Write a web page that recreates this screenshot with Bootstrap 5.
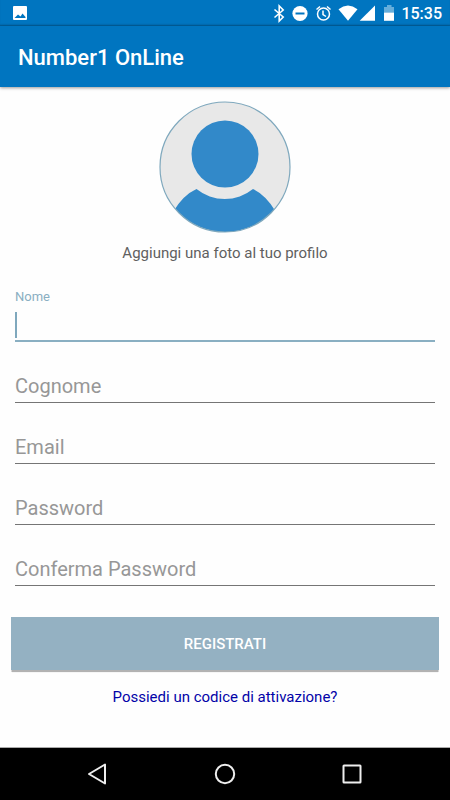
<!DOCTYPE html>
<html lang="it">
<head>
<meta charset="utf-8">
<meta name="viewport" content="width=device-width, initial-scale=1">
<title>Number1 OnLine</title>
<link href="https://cdn.jsdelivr.net/npm/bootstrap@5.3.0/dist/css/bootstrap.min.css" rel="stylesheet">
<style>
body { font-family: Roboto, sans-serif; background: #fefefe; }
.status-strip, .app-bar { background: #0075c0; color: #fff; }
.status-strip { height: 26px; font-size: 16px; line-height: 20px; font-weight: 500; box-shadow: inset 0 -2px 2px -1px rgba(0, 0, 0, .25); }
.status-strip .clock { padding-top: 2px; }
.status-strip svg, .sys-nav svg, .avatar svg { display: block; }
.app-bar { height: 61px; padding: 2px 18px 0; box-shadow: 0 1px 3px rgba(0, 0, 0, .4); }
.app-title { font-size: 22px; line-height: 28px; font-weight: 500; }
.avatar { margin-top: 14px; border-radius: 50%; }
.caption { font-size: 15px; line-height: 20px; margin-top: 10px; color: #606060; }
.sign-up { padding: 18px 11px 0; }
.field { height: 61px; margin: 0 4px; }
.field label { font-size: 13px; line-height: 16px; color: #8aafc2; }
.field .form-control { height: 37px; padding: 3px 0 0; font-size: 20px; line-height: 24px; border: 0; border-bottom: 1px solid #757575; border-radius: 0; background-color: transparent; box-shadow: none; }
.field .form-control.is-current { border-bottom: 2px solid #8aafc2; caret-color: transparent; background: linear-gradient(#7fa8bd, #7fa8bd) 0 7px / 2px 26px no-repeat; }
.field-hint > * { grid-area: 1 / 1; align-self: end; }
.field-hint label { height: 37px; padding-top: 8px; font-size: 20px; line-height: 24px; color: #979797; pointer-events: none; }
.field-hint .form-control:not(:placeholder-shown) + label { visibility: hidden; }
.btn-register { height: 53px; margin-top: 31px; padding-top: 8px; font-size: 15px; font-weight: 500; color: #fff; background: #94b1c2; border: 0; border-radius: 0; box-shadow: 0 3px 1px -1px rgba(0, 0, 0, .2), 0 2px 0 rgba(0, 0, 0, .12); }
.btn-register:hover { color: #fff; background: #86a6b8; }
.activation { font-size: 15px; line-height: 20px; margin-top: 17px; color: #0303a8; }
.sys-nav { height: 53px; background: #000; border-top: 1px solid #aaa; padding: 0 34px; }
.sys-nav button { width: 128px; background: none; }
</style>
<script src="https://cdn.jsdelivr.net/npm/bootstrap@5.3.0/dist/js/bootstrap.bundle.min.js"></script>
</head>
<body class="d-flex flex-column min-vh-100">
<div class="status-strip d-flex align-items-center justify-content-between ps-2 pe-2">
  <svg class="ms-1" width="16" height="16" viewBox="0 0 16 16" aria-hidden="true"><path fill="#fff" fill-rule="evenodd" d="M2 1h12a1 1 0 0 1 1 1v12a1 1 0 0 1-1 1H2a1 1 0 0 1-1-1V2a1 1 0 0 1 1-1zM2.500 13h11V12L10.500 8.500 8.500 11.500 6 9.500z"/></svg>
  <div class="d-flex align-items-center">
    <svg width="132" height="20" viewBox="269 3 132 20" aria-hidden="true">
      <path d="M274.500 9.500l8.700 7.500-4 4V6l4 4-8.700 7.500" fill="none" stroke="#fff" stroke-width="1.600"/>
      <circle cx="300" cy="13.500" r="7.600" fill="#fff"/><path d="M295.500 12.500h9v2h-9z" fill="#0075c0"/>
      <g fill="none" stroke="#fff" stroke-width="1.500"><circle cx="323.500" cy="14" r="6"/><path d="M316.500 9.500l3.500-3M330.500 9.500l-3.500-3M323 10.500v4l3 2"/></g>
      <path d="M338.500 9.200q9.500-7.400 19 0L348 20.800z" fill="#fff"/>
      <path d="M375 5.500v15.300h-15.300z" fill="#fff"/>
      <path d="M384 7h3V5h4.500v2h2.500v5.500h-10z" fill="#66aedb"/><path d="M384 12.500h10v8.300h-10z" fill="#fff"/>
    </svg>
    <span class="clock">15:35</span>
  </div>
</div>
<header class="app-bar d-flex align-items-center">
  <h1 class="app-title mb-0">Number1 OnLine</h1>
</header>
<main class="flex-grow-1 d-flex flex-column">
  <button type="button" class="avatar btn p-0 border-0 align-self-center" aria-label="Aggiungi una foto al tuo profilo">
    <svg width="132" height="132" viewBox="0 0 132 132" aria-hidden="true">
      <defs><clipPath id="disc"><circle cx="66" cy="66" r="65"/></clipPath></defs>
      <circle cx="66" cy="66" r="65" fill="#e8e8e8"/>
      <g clip-path="url(#disc)" fill="#3289c9"><circle cx="66" cy="53" r="33.500"/><path d="M37.500 88A45 45 0 0 0 94 88Q107 94 117 111V132H14V111Q24 94 37.500 88z"/></g>
      <circle cx="66" cy="66" r="65" fill="none" stroke="#7fa8bd" stroke-width="1.200"/>
    </svg>
  </button>
  <p class="caption text-center mb-0">Aggiungi una foto al tuo profilo</p>
  <form class="sign-up d-flex flex-column">
    <div class="field d-flex flex-column justify-content-end">
      <label for="nome">Nome</label>
      <input id="nome" type="text" class="form-control is-current">
    </div>
    <div class="field field-hint d-grid">
      <input id="cognome" type="text" class="form-control" placeholder=" ">
      <label for="cognome">Cognome</label>
    </div>
    <div class="field field-hint d-grid">
      <input id="email" type="email" class="form-control" placeholder=" ">
      <label for="email">Email</label>
    </div>
    <div class="field field-hint d-grid">
      <input id="password" type="password" class="form-control" placeholder=" ">
      <label for="password">Password</label>
    </div>
    <div class="field field-hint d-grid">
      <input id="conferma" type="password" class="form-control" placeholder=" ">
      <label for="conferma">Conferma Password</label>
    </div>
    <button type="submit" class="btn btn-register w-100">REGISTRATI</button>
    <a href="#" class="activation align-self-center text-decoration-none">Possiedi un codice di attivazione?</a>
  </form>
</main>
<nav class="sys-nav d-flex align-items-center justify-content-between" aria-label="Navigazione di sistema">
  <button type="button" class="border-0 p-0 d-flex justify-content-center" aria-label="Indietro"><svg width="22" height="22" viewBox="0 0 22 22"><path d="M18 1.500v19L2 11z" fill="none" stroke="#eee" stroke-width="2" stroke-linejoin="round"/></svg></button>
  <button type="button" class="border-0 p-0 d-flex justify-content-center" aria-label="Home"><svg width="22" height="22" viewBox="0 0 22 22"><circle cx="11" cy="11" r="9.200" fill="none" stroke="#eee" stroke-width="2"/></svg></button>
  <button type="button" class="border-0 p-0 d-flex justify-content-center" aria-label="Recenti"><svg width="22" height="22" viewBox="0 0 22 22"><rect x="2.500" y="2.500" width="17" height="17" rx=".5" fill="none" stroke="#eee" stroke-width="2"/></svg></button>
</nav>
</body>
</html>
